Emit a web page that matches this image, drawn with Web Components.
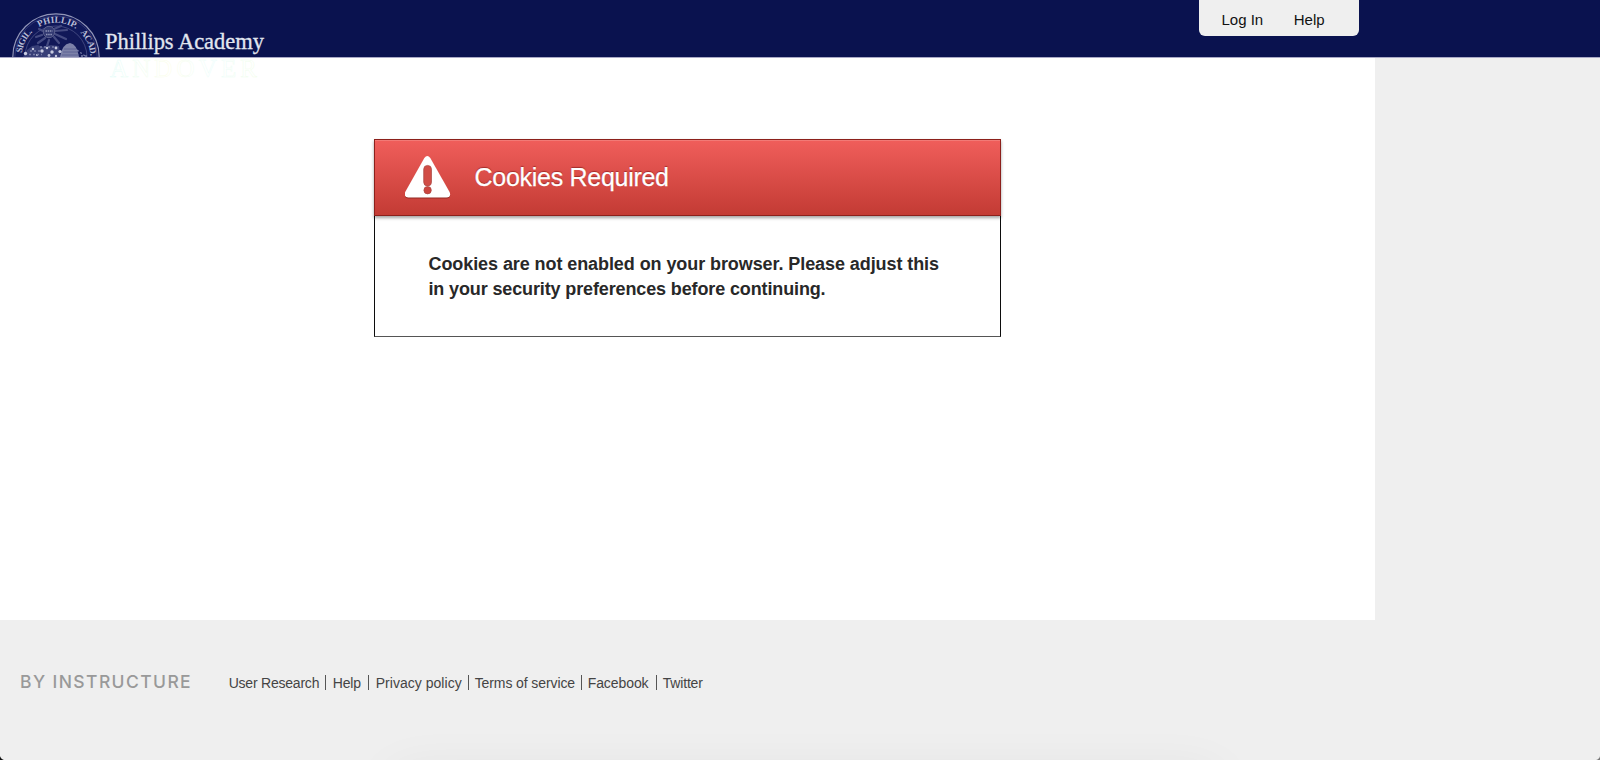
<!DOCTYPE html>
<html lang="en">
<head>
<meta charset="utf-8">
<title>Cookies Required</title>
<style>
html,body{margin:0;height:100%;background:#efefef;overflow:hidden}
body{font-family:"Liberation Sans",Arial,sans-serif}
</style>
</head>
<body>
<app-page>
  <site-header slot="header">
    <academy-logo></academy-logo>
    <user-nav slot="nav"><span>Log In</span><span>Help</span></user-nav>
  </site-header>
  <alert-box>
    <span slot="title">Cookies Required</span>
    Cookies are not enabled on your browser. Please adjust this<br><span style="letter-spacing:-.13px">in your security preferences before continuing.</span>
  </alert-box>
  <site-footer slot="footer">
    <span slot="brand">BY INSTRUCTURE</span>
    <footer-link style="width:96px;letter-spacing:-.22px">User Research</footer-link>
    <footer-link style="width:35px">Help</footer-link>
    <footer-link style="width:92px;letter-spacing:.03px;margin-right:6px">Privacy policy</footer-link>
    <footer-link style="width:106px;letter-spacing:-.1px;margin-right:6px">Terms of service</footer-link>
    <footer-link style="width:68px;letter-spacing:-.08px;margin-right:6px">Facebook</footer-link>
    <footer-link last>Twitter</footer-link>
  </site-footer>
</app-page>
<script>
function define(name, html) {
  const template = document.createElement('template');
  template.innerHTML = html;
  customElements.define(name, class extends HTMLElement {
    constructor() {
      super();
      this.attachShadow({mode: 'open'}).append(template.content.cloneNode(true));
    }
  });
}

define('app-page', `
<style>
:host{display:flex;flex-direction:column;height:760px;width:1600px;position:relative;overflow:hidden}
main{width:1375px;height:562px;background:#fff;box-sizing:border-box;padding:81px 0 0 374px}
.glow{position:absolute;left:395px;top:778px;width:820px;height:30px;border-radius:20px;box-shadow:0 0 50px 8px rgba(0,0,0,.06)}
.corner{position:absolute;bottom:0;width:5px;height:5px}
.l{left:0;background:radial-gradient(circle at 5px 0,transparent 4.6px,#111 5.4px)}
.r{right:0;background:radial-gradient(circle at 0 0,transparent 4.6px,#777 5.6px)}
</style>
<slot name="header"></slot>
<main><slot></slot></main>
<slot name="footer"></slot>
<div class="glow"></div><div class="corner l"></div><div class="corner r"></div>`);

define('site-header', `
<style>
:host{display:flex;justify-content:space-between;align-items:flex-start;height:57px;background:#0a124f;border-bottom:1px solid #aaa9c6;padding-right:241px;z-index:1}
</style>
<slot></slot><slot name="nav"></slot>`);

define('academy-logo', `
<style>:host{display:block;width:280px;height:57px}svg{display:block;overflow:visible;font-family:"Liberation Serif",serif}</style>
<svg width="280" height="84" viewBox="0 0 280 84">
  <defs>
    <clipPath id="bar"><rect width="280" height="57"/></clipPath>
    <clipPath id="below"><rect y="58" width="280" height="26"/></clipPath>
    <path id="arc" d="M21.7 57a34.3 34.3 0 0 1 68.6 0"/>
    <linearGradient id="tint"><stop offset="0" stop-color="#e2fbf8"/><stop offset=".4" stop-color="#fbfde9"/><stop offset=".7" stop-color="#eafcfa"/><stop offset="1" stop-color="#f2fdea"/></linearGradient>
  </defs>
  <g clip-path="url(#bar)">
    <circle cx="56" cy="57" r="43.2" fill="#10185a" stroke="#9296b8" stroke-width="1.2"/>
    <circle cx="56" cy="57" r="41.2" fill="none" stroke="#3c427b" stroke-width=".7"/>
    <circle cx="56" cy="57" r="31" fill="#111858" stroke="#454b82" stroke-width=".9"/>
    <g font-size="9" font-weight="bold" fill="#b9bdd6">
      <text><textPath href="#arc" startOffset="4" textLength="24" lengthAdjust="spacing">SIGIL.</textPath></text>
      <text><textPath href="#arc" startOffset="36" textLength="39" lengthAdjust="spacing">PHILLIP.</textPath></text>
      <text><textPath href="#arc" startOffset="80.5" textLength="26" lengthAdjust="spacing">ACAD.</textPath></text>
    </g>
    <g stroke="#454b82" stroke-width="2.2" stroke-linecap="round" fill="none">
      <path d="M43 31l-4-2M42 35l-6 2M45 38l-7 5M49 40l-2 6M54 37l5 6M55 34l11 5M55 31l12-1M54 29l7-3"/>
    </g>
    <circle cx="49" cy="32" r="5.7" fill="#333a73" stroke="#5b608e"/>
    <path d="M45.5 31h7M46 34.5h6" stroke="#8f94b8" stroke-width="1.5" stroke-dasharray="1.5 .7"/>
    <path d="M23 57l4-7 5-4 6-1 3 2 10-2 8 1 2 11z" fill="#373e77"/>
    <path d="M60 57q2-13 10-14 7 1 9 14z" fill="#7c81a8"/>
    <path d="M64 49h12M63 52h15M62 55h17" stroke="#555b8f" stroke-width=".8"/>
    <g fill="#c8cbe0">
      <circle cx="25.5" cy="53.5" r="1.7"/><circle cx="33" cy="49" r="1.2"/><circle cx="42" cy="51" r="1.7"/><circle cx="47" cy="48" r="1.2"/><circle cx="52" cy="52" r="1.7"/><circle cx="56" cy="48" r="1.4"/><circle cx="60" cy="51.5" r="1.6"/><circle cx="49" cy="55.5" r="1.4"/><circle cx="56" cy="56" r="1.2"/><circle cx="37" cy="55" r="1"/>
    </g>
    <g stroke="#777ca8" stroke-width="1.3" stroke-dasharray="2 2"><path d="M30 51h12M29 54.5h13M40 47h14M77 50l8 6M81 56h6"/></g>
  </g>
  <text x="105" y="48.5" font-family="'Palatino Linotype','Liberation Serif',serif" font-size="22.5" fill="#e1e6ef" stroke="#e1e6ef" stroke-width=".3" textLength="159" lengthAdjust="spacing">Phillips Academy</text>
  <g clip-path="url(#below)"><text x="110" y="77" font-size="25" fill="#fff" stroke="url(#tint)" stroke-width=".5" textLength="147" lengthAdjust="spacing">ANDOVER</text></g>
</svg>`);

define('user-nav', `
<style>
:host{display:flex;gap:30.5px;box-sizing:border-box;width:160.5px;height:36px;padding:11px 0 0 23px;background:#efefef;border-radius:0 0 6px 6px;font-size:15px;line-height:17px;color:#111;white-space:nowrap}
</style><slot></slot>`);

define('warning-icon', `
<style>:host{display:block;width:46px;height:43px;filter:drop-shadow(0 1px 0 rgba(100,20,15,.55))}svg{display:block}</style>
<svg width="46" height="43" viewBox="0 0 46 43">
<path d="M19.3 2Q22.3-2 25.3 2L44.6 36Q46.5 41.4 41.5 41.4H3.2Q-1.5 41.4.2 36z" fill="#fff"/>
<rect x="18.7" y="9.4" width="7.8" height="20.6" rx="3.9" fill="#d14d46" stroke="#a94541" stroke-width=".7"/>
<circle cx="22.6" cy="34.2" r="3.7" fill="#cc453f" stroke="#a94541" stroke-width=".7"/>
</svg>`);

define('alert-box', `
<style>
:host{display:block;box-sizing:border-box;width:627px;height:198px;color:#282828}
header{display:flex;align-items:flex-start;box-sizing:border-box;height:77px;border:1px solid #8c201b;background:linear-gradient(#f05e5b,#c33b34);box-shadow:inset 0 1px 0 #f27a76,0 2px 3px rgba(0,0,0,.36);padding:16px 0 0 30px;position:relative}
h1{margin:7px 0 0 23.5px;font:400 25px/28px "Liberation Sans",Arial,sans-serif;letter-spacing:-.28px;color:#fff;-webkit-text-stroke:.25px #fff;text-shadow:0 -1px 1px rgba(100,10,10,.5)}
section{box-sizing:border-box;height:121px;border:solid #0c0c0c;border-width:0 1px 1px;border-bottom-color:#555;padding:36px 0 0 53.5px;font-weight:bold;font-size:18px;line-height:25px;letter-spacing:-.08px;white-space:nowrap}
</style>
<header><warning-icon></warning-icon><h1><slot name="title"></slot></h1></header>
<section><slot></slot></section>`);

define('site-footer', `
<style>
:host{display:flex;align-items:flex-start;padding:53px 0 0 20px;color:#444}
.brand{width:208.7px;font:500 17.5px/20px Inter,sans-serif;letter-spacing:1.4px;color:#999;white-space:nowrap;margin-top:-1px}
nav{display:flex;margin-top:2px}
</style>
<div class="brand"><slot name="brand"></slot></div><nav><slot></slot></nav>`);

define('footer-link', `
<style>
:host{display:block;font-size:14px;line-height:16px;letter-spacing:-.17px;white-space:nowrap;border-right:1px solid #555;margin-right:7px;height:15px}
:host([last]){border:0}
</style><slot></slot>`);
</script>
</body>
</html>
